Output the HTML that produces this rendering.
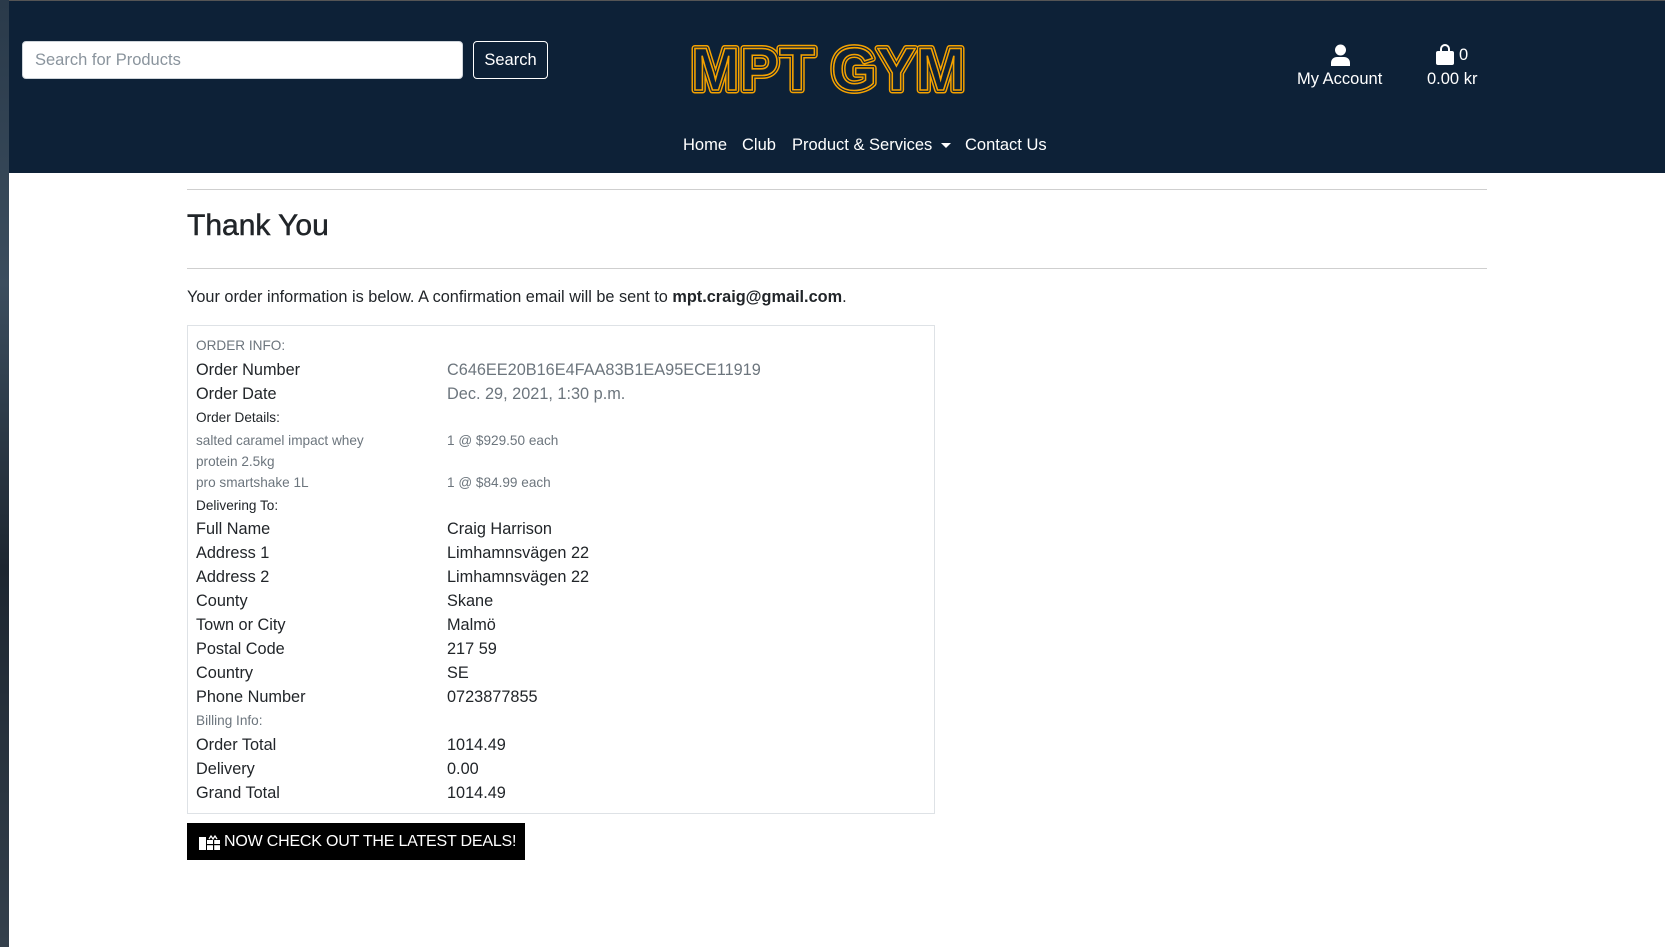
<!DOCTYPE html>
<html><head><meta charset="utf-8">
<style>
*{box-sizing:border-box;margin:0;padding:0}
html,body{width:1665px;height:947px;overflow:hidden;background:#fff;font-family:"Liberation Sans",Arial,sans-serif;color:#212529}
.strip{position:absolute;left:0;top:0;width:9px;height:947px;background:linear-gradient(#2a3a4a,#3b4d5e 30%,#1d2630 60%,#34404c)}
.header{position:absolute;left:9px;top:0;width:1656px;height:173px;background:#0d2137;border-top:1px solid #555}
.abs{position:absolute}
.search{left:22px;top:41px;width:441px;height:38px;background:#fff;border:1px solid #ced4da;border-radius:4px;color:#8a949d;font-size:16.5px;line-height:36px;padding-left:12px}
.sbtn{left:473px;top:41px;width:75px;height:38px;border:1px solid #fff;border-radius:4px;color:#fff;font-size:16.5px;line-height:36px;text-align:center}
.nav{top:134px;color:#fff;font-size:16.5px;line-height:22px}
.wt{color:#fff;font-size:16.5px;line-height:20px}
.hr{position:absolute;left:187px;width:1300px;height:1px;background:#cfcfcf}
.box{left:187px;top:325px;width:748px;height:489px;border:1px solid #dee2e6}
.r{position:absolute;left:196px;line-height:24px;white-space:nowrap}
.v{position:absolute;left:447px;line-height:24px;white-space:nowrap}
.L{font-size:16.3px}.S{font-size:13.6px}.g{color:#6c757d}
.btn{left:187px;top:823px;width:338px;height:37px;background:#000;color:#fff;font-size:16px;line-height:37px;padding-left:37px;white-space:nowrap;letter-spacing:-0.2px}
</style></head><body>
<div class="strip"></div>
<div class="header"></div>
<div class="abs search">Search for Products</div>
<div class="abs sbtn">Search</div>
<svg class="abs" style="left:688px;top:40px" width="282" height="56">
<text x="3" y="50" font-family="Liberation Sans, sans-serif" font-weight="bold" font-size="60" textLength="274" lengthAdjust="spacingAndGlyphs" fill="none" stroke="#f5a200" stroke-width="7" stroke-linejoin="round">MPT GYM</text>
<text x="3" y="50" font-family="Liberation Sans, sans-serif" font-weight="bold" font-size="60" textLength="274" lengthAdjust="spacingAndGlyphs" fill="none" stroke="#0d2137" stroke-width="4" stroke-linejoin="round">MPT GYM</text>
<text x="3" y="50" font-family="Liberation Sans, sans-serif" font-weight="bold" font-size="60" textLength="274" lengthAdjust="spacingAndGlyphs" fill="#0d2137" stroke="#f5a200" stroke-width="1.6">MPT GYM</text>
</svg>
<div class="abs nav" style="left:683px">Home</div>
<div class="abs nav" style="left:742px">Club</div>
<div class="abs nav" style="left:792px">Product &amp; Services <span style="display:inline-block;border-left:5px solid transparent;border-right:5px solid transparent;border-top:5px solid #fff;vertical-align:middle;margin-left:4px"></span></div>
<div class="abs nav" style="left:965px">Contact Us</div>
<svg class="abs" style="left:1331px;top:44px" width="19" height="22" viewBox="0 0 19 22"><circle cx="9.5" cy="6" r="5.5" fill="#fff"/><path d="M0 22v-3c0-4 3-6 6-6h7c3 0 6 2 6 6v3z" fill="#fff"/></svg>
<div class="abs wt" style="left:1297px;top:69px">My Account</div>
<svg class="abs" style="left:1435px;top:44px" width="20" height="21" viewBox="0 0 20 21"><path d="M6 7V5a4 4 0 0 1 8 0v2" fill="none" stroke="#fff" stroke-width="2"/><rect x="1" y="7" width="18" height="14" rx="2" fill="#fff"/></svg>
<div class="abs wt" style="left:1459px;top:45px">0</div>
<div class="abs wt" style="left:1427px;top:69px">0.00 kr</div>
<div class="hr" style="top:189px"></div>
<div class="abs" style="left:187px;top:208px;font-size:30px;line-height:36px;-webkit-text-stroke:0.5px #212529">Thank You</div>
<div class="hr" style="top:268px"></div>
<div class="abs" style="left:187px;top:286px;font-size:16.3px;line-height:22px">Your order information is below. A confirmation email will be sent to <b>mpt.craig@gmail.com</b>.</div>
<div class="abs box"></div>
<div class="r S g" style="top:334px">ORDER INFO:</div>
<div class="r L" style="top:358px">Order Number</div><div class="v L g" style="top:358px">C646EE20B16E4FAA83B1EA95ECE11919</div>
<div class="r L" style="top:382px">Order Date</div><div class="v L g" style="top:382px">Dec. 29, 2021, 1:30 p.m.</div>
<div class="r S" style="top:406px">Order Details:</div>
<div class="r S g" style="top:429px">salted caramel impact whey</div><div class="v S g" style="top:429px">1 @ $929.50 each</div>
<div class="r S g" style="top:450px">protein 2.5kg</div>
<div class="r S g" style="top:471px">pro smartshake 1L</div><div class="v S g" style="top:471px">1 @ $84.99 each</div>
<div class="r S" style="top:494px">Delivering To:</div>
<div class="r L" style="top:517px">Full Name</div><div class="v L" style="top:517px">Craig Harrison</div>
<div class="r L" style="top:541px">Address 1</div><div class="v L" style="top:541px">Limhamnsvägen 22</div>
<div class="r L" style="top:565px">Address 2</div><div class="v L" style="top:565px">Limhamnsvägen 22</div>
<div class="r L" style="top:589px">County</div><div class="v L" style="top:589px">Skane</div>
<div class="r L" style="top:613px">Town or City</div><div class="v L" style="top:613px">Malmö</div>
<div class="r L" style="top:637px">Postal Code</div><div class="v L" style="top:637px">217 59</div>
<div class="r L" style="top:661px">Country</div><div class="v L" style="top:661px">SE</div>
<div class="r L" style="top:685px">Phone Number</div><div class="v L" style="top:685px">0723877855</div>
<div class="r S g" style="top:709px">Billing Info:</div>
<div class="r L" style="top:733px">Order Total</div><div class="v L" style="top:733px">1014.49</div>
<div class="r L" style="top:757px">Delivery</div><div class="v L" style="top:757px">0.00</div>
<div class="r L" style="top:781px">Grand Total</div><div class="v L" style="top:781px">1014.49</div>
<div class="abs btn">NOW CHECK OUT THE LATEST DEALS!</div>
<svg class="abs" style="left:199px;top:834px" width="21" height="16" viewBox="0 0 21 16"><rect x="0" y="3" width="7" height="13" fill="#fff"/><rect x="8" y="6" width="13" height="10" fill="#fff"/><rect x="8" y="10" width="13" height="1.2" fill="#000"/><rect x="14" y="6" width="1.2" height="10" fill="#000"/><path d="M10 5l2-3 2 3 2-3 2 3" stroke="#fff" fill="none" stroke-width="1.3"/></svg>
</body></html>
